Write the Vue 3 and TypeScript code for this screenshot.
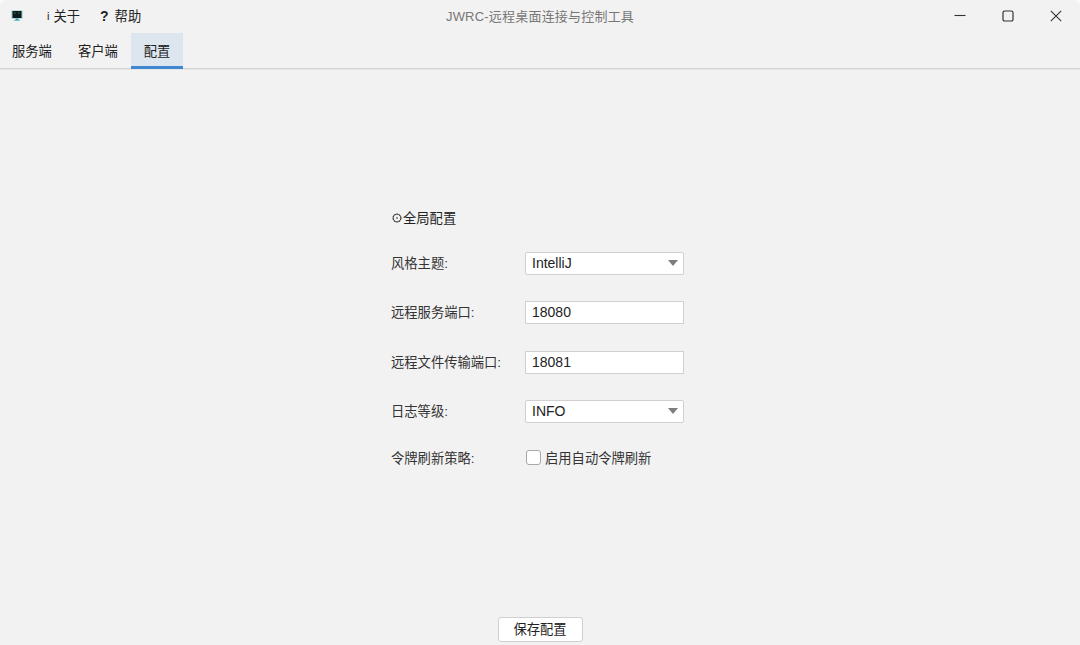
<script setup lang="ts">
interface Row { label: string; kind: 'select' | 'input' | 'check'; value: string }
const rows: Row[] = [
  { label: '风格主题:', kind: 'select', value: 'IntelliJ' },
  { label: '远程服务端口:', kind: 'input', value: '18080' },
  { label: '远程文件传输端口:', kind: 'input', value: '18081' },
  { label: '日志等级:', kind: 'select', value: 'INFO' },
  { label: '令牌刷新策略:', kind: 'check', value: '启用自动令牌刷新' },
]
const tabs = ['服务端', '客户端', '配置']
</script>

<template>
  <div class="window">
    <header class="titlebar">
      <svg class="logo" width="12" height="12" viewBox="0 0 12 12">
        <rect x="0.5" y="0.5" width="11" height="8" fill="#3f9ea3" opacity="0.55" />
        <rect x="1.5" y="1" width="9" height="7" fill="#0a1c1e" />
        <rect x="3" y="2.5" width="1.5" height="1" fill="#4a7a60" />
        <rect x="7" y="2.5" width="1.5" height="1" fill="#4a7a60" />
        <rect x="4.5" y="8.5" width="3" height="1.5" fill="#2f9ca3" />
        <rect x="3" y="10" width="6" height="1" fill="#6fc3c9" />
      </svg>
      <nav class="menu">
        <span class="menu-item"><span class="mi">i</span>关于</span>
        <span class="menu-item"><span class="mq">?</span>帮助</span>
      </nav>
      <div class="title">JWRC-远程桌面连接与控制工具</div>
      <div class="controls">
        <svg width="12" height="12" viewBox="0 0 12 12"><path d="M0.5 5.5H11.5" stroke="#333" stroke-width="1.1" fill="none" /></svg>
        <svg width="12" height="12" viewBox="0 0 12 12"><rect x="1" y="1" width="10" height="10" rx="1.6" stroke="#333" stroke-width="1.2" fill="none" /></svg>
        <svg width="12" height="12" viewBox="0 0 12 12"><path d="M0.8 0.8L11.2 11.2M11.2 0.8L0.8 11.2" stroke="#333" stroke-width="1.1" fill="none" /></svg>
      </div>
    </header>
    <div class="tabs">
      <div v-for="(t, i) in tabs" :key="t" class="tab" :class="{ active: i === 2 }">{{ t }}</div>
    </div>
    <main class="content">
      <div class="form">
        <div class="heading">
          <svg class="gear" width="10" height="10" viewBox="0 0 10 10">
            <circle cx="5" cy="5" r="3.9" fill="none" stroke="#333" stroke-width="1.2" stroke-dasharray="2.1 0.35" />
            <circle cx="5" cy="5" r="1" fill="#777" />
          </svg>全局配置
        </div>
        <div v-for="r in rows" :key="r.label" class="row" :class="r.kind">
          <label class="label">{{ r.label }}</label>
          <div v-if="r.kind === 'select'" class="field">
            <span>{{ r.value }}</span>
            <i class="caret"></i>
          </div>
          <div v-else-if="r.kind === 'input'" class="field square">{{ r.value }}</div>
          <div v-else class="check"><i class="box"></i>{{ r.value }}</div>
        </div>
      </div>
      <div class="footer"><button class="save">保存配置</button></div>
    </main>
  </div>
</template>

<style>
html, body { margin: 0; background: #fafafa; }
</style>

<style scoped>
.window {
  width: 1080px;
  height: 645px;
  display: flex;
  flex-direction: column;
  background: #f2f2f2;
  color: #222;
  font-family: "Liberation Sans", "Noto Sans CJK SC", sans-serif;
  font-size: 13.3px;
  overflow: hidden;
  border-radius: 7px 7px 0 0;
}
.titlebar {
  height: 33px;
  flex: none;
  box-sizing: border-box;
  padding: 0 0 2px 11px;
  display: flex;
  align-items: center;
  position: relative;
}
.logo { flex: none; }
.menu { display: flex; margin-left: 24px; gap: 20px; }
.menu-item { display: flex; align-items: center; }
.mi { font-size: 11px; margin-right: 4px; }
.mq { font-weight: 700; margin-right: 6px; font-size: 14px; }
.title {
  position: absolute;
  left: 0;
  right: 0;
  top: 6px;
  text-align: center;
  color: #777;
  font-size: 13px;
  letter-spacing: 0.2px;
  pointer-events: none;
}
.controls {
  margin-left: auto;
  display: flex;
  gap: 36px;
  padding-right: 18px;
  position: relative;
}
.tabs {
  height: 36px;
  flex: none;
  box-sizing: border-box;
  display: flex;
  border-bottom: 1px solid #d4d4d4;
  box-shadow: 0 1px 0 #e6e6e6;
}
.tab {
  padding: 2px 13px 0;
  line-height: 34px;
  height: 36px;
  box-sizing: border-box;
}
.tab:first-child { padding-left: 12px; }
.tab.active {
  background: #dde6ef;
  border-bottom: 3px solid #3f87d0;
}
.content {
  flex: 1;
  display: flex;
  flex-direction: column;
  align-items: center;
  min-height: 0;
}
.form {
  width: 298px;
  margin-top: 140px;
  flex: 1;
}
.heading {
  height: 18px;
  line-height: 19px;
  margin-bottom: 25px;
  display: flex;
  align-items: flex-start;
}
.gear { flex: none; margin: 4px 1px 0 1px; }
.row {
  display: flex;
  align-items: center;
  height: 23px;
  margin-bottom: 26.3px;
}
.row.check { height: 16px; margin-bottom: 0; }
.label { width: 134px; flex: none; color: #333; padding-bottom: 2px; }
.row.check .label { padding-bottom: 0; }
.field {
  width: 159px;
  height: 23px;
  box-sizing: border-box;
  display: flex;
  align-items: center;
  justify-content: space-between;
  padding: 0 7px 1px 6px;
  background: #fff;
  border: 1px solid #d0d0d0;
  border-radius: 2px;
  font-size: 14px;
}
.field.square { border-radius: 0; }
.caret {
  width: 0;
  height: 0;
  border-left: 5px solid transparent;
  border-right: 5px solid transparent;
  border-top: 6px solid #7d7d7d;
  margin-right: -2px;
}
.check { display: flex; align-items: center; color: #333; }
.box {
  width: 15px;
  height: 15px;
  box-sizing: border-box;
  background: #fff;
  border: 1px solid #a8a8a8;
  border-radius: 3px;
  margin: 0 4px 0 1px;
}
.footer {
  flex: none;
  height: 28px;
  display: flex;
  align-items: flex-start;
}
.save {
  width: 85px;
  height: 25px;
  padding: 0 0 3px;
  box-sizing: border-box;
  background: #fff;
  border: 1px solid #d0d0d0;
  border-radius: 3px;
  font: inherit;
  color: #222;
}
</style>
